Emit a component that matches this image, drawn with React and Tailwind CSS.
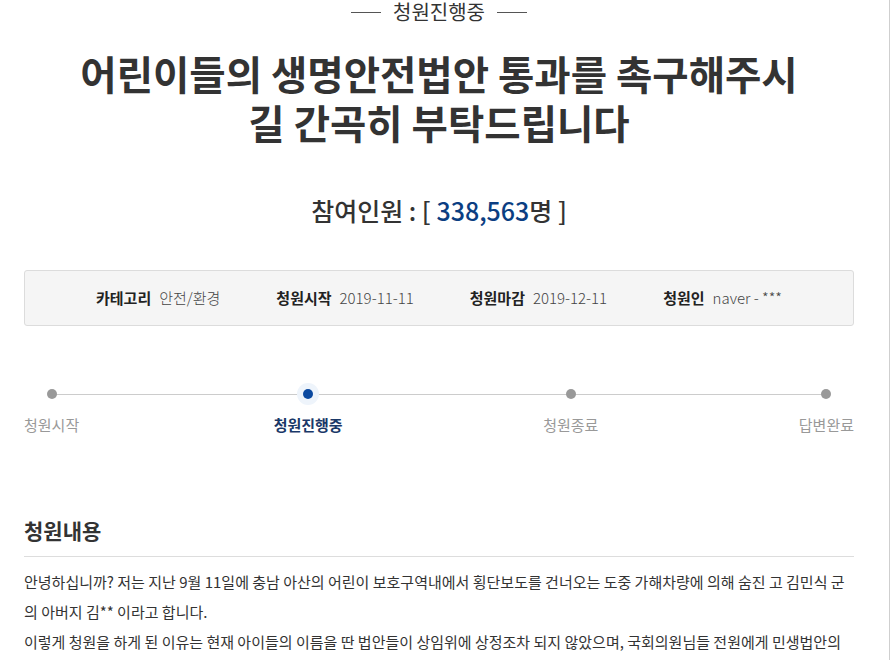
import React from "react";

const font = { fontFamily: '"Noto Sans CJK KR", "Noto Sans", sans-serif' };

const info = [
  { label: "카테고리", value: "안전/환경" },
  { label: "청원시작", value: "2019-11-11" },
  { label: "청원마감", value: "2019-12-11" },
  { label: "청원인", value: "naver - ***" },
];

const steps = [
  { label: "청원시작", active: false },
  { label: "청원진행중", active: true },
  { label: "청원종료", active: false },
  { label: "답변완료", active: false },
];

const App = () => {
  return (
    <div
      className="w-[890px] min-h-[660px] bg-white border-r border-[#cfcfcf] text-[#333]"
      style={font}
    >
      <div className="w-[854px] pl-6">
        {/* status tag */}
        <div className="flex items-center justify-center gap-3 h-[24px]">
          <span className="w-[30px] h-px bg-[#555]"></span>
          <span className="text-[20px] leading-[24px] text-[#333]">청원진행중</span>
          <span className="w-[30px] h-px bg-[#555]"></span>
        </div>

        {/* title */}
        <h1 className="mt-[24px] text-center text-[39.5px] leading-[49px] font-bold">
          어린이들의 생명안전법안 통과를 촉구해주시
          <br />
          길 간곡히 부탁드립니다
        </h1>

        {/* participants */}
        <div className="mt-[48px] text-center text-[25px] leading-8 font-medium">
          참여인원 : [ <span className="text-[#0b3e82]">338,563</span>명 ]
        </div>

        {/* info box */}
        <div className="mt-[44px] h-[56px] flex items-center justify-center gap-[56px] bg-[#f5f5f5] border border-[#dcdcdc] rounded-[3px] text-[15px]">
          {info.map((item) => (
            <div key={item.label} className="flex items-center gap-[8px]">
              <span className="font-bold text-[#222]">{item.label}</span>
              <span className="font-light text-[#444]">{item.value}</span>
            </div>
          ))}
        </div>

        {/* progress */}
        <div className="relative mt-[63px]">
          <div className="absolute left-[27px] right-[28px] top-[5px] h-px bg-[#cccccc]"></div>
          <div className="relative flex justify-between">
            {steps.map((s, i) => (
              <div
                key={s.label}
                className={
                  i === 1
                    ? "flex flex-col items-center -ml-[6px]"
                    : "flex flex-col items-center"
                }
              >
                <span
                  className={
                    s.active
                      ? "w-[10px] h-[10px] rounded-full bg-[#0b49a0] shadow-[0_0_0_6px_#eef4fb]"
                      : "w-[10px] h-[10px] rounded-full bg-[#999999]"
                  }
                ></span>
                <span
                  className={
                    s.active
                      ? "mt-[16px] text-[15px] leading-5 font-bold text-[#1a3868]"
                      : "mt-[16px] text-[15px] leading-5 text-[#999]"
                  }
                >
                  {s.label}
                </span>
              </div>
            ))}
          </div>
        </div>

        {/* content */}
        <h2 className="mt-[81px] pb-3 text-[21px] leading-7 font-bold border-b border-[#dddddd]">
          청원내용
        </h2>
        <div className="mt-[10px] text-[15px] leading-[30px] text-[#333] whitespace-nowrap">
          <div>
            안녕하십니까? 저는 지난 9월 11일에 충남 아산의 어린이 보호구역내에서 횡단보도를 건너오는 도중 가해차량에 의해 숨진 고 김민식 군
          </div>
          <div>의 아버지 김** 이라고 합니다.</div>
          <div>
            이렇게 청원을 하게 된 이유는 현재 아이들의 이름을 딴 법안들이 상임위에 상정조차 되지 않았으며, 국회의원님들 전원에게 민생법안의
          </div>
        </div>
      </div>
    </div>
  );
};

export default App;
